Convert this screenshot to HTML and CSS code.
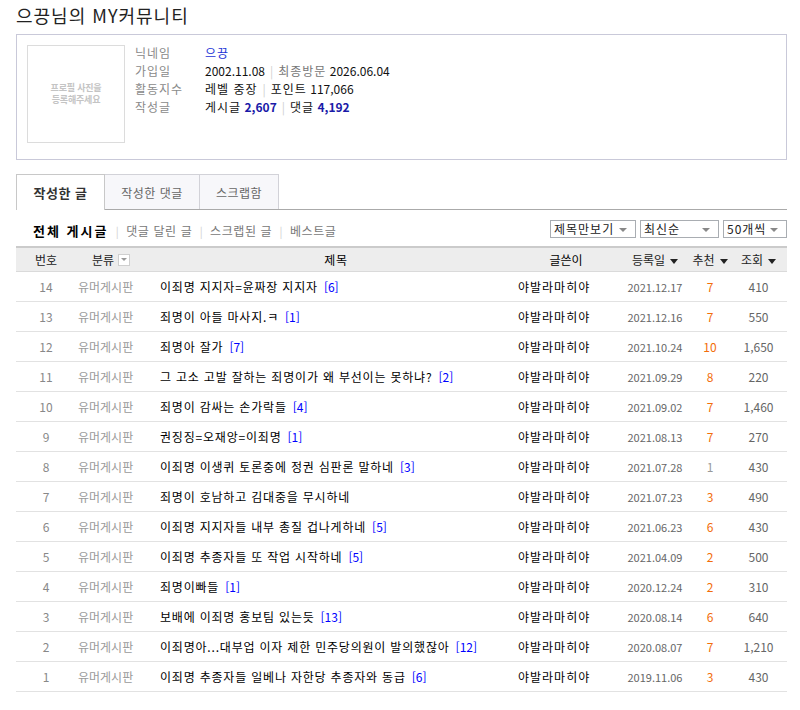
FILE: index.html
```html
<!DOCTYPE html>
<html lang="ko">
<head>
  <meta charset="UTF-8">
  <title>으끙님의 MY커뮤니티</title>
  <link rel="stylesheet" href="styles.css">
</head>
<body>

  <div class="page">
    <h1 class="page-title">으끙님의 MY커뮤니티</h1>

    <div class="profile">
      <div class="photo">
        <span>프로필 사진을<br>등록해주세요</span>
      </div>
      <div class="info">
        <div class="info-row">
          <span class="label">닉네임</span>
          <span class="value"><span class="nick ko">으끙</span></span>
        </div>
        <div class="info-row">
          <span class="label">가입일</span>
          <span class="value">2002.11.08<span class="sep">|</span><span class="sub-label ko">최종방문</span> 2026.06.04</span>
        </div>
        <div class="info-row">
          <span class="label">활동지수</span>
          <span class="value"><span class="ko">레벨 중장</span><span class="sep">|</span><span class="ko">포인트</span> 117,066</span>
        </div>
        <div class="info-row">
          <span class="label">작성글</span>
          <span class="value"><span class="ko">게시글</span> <b class="count">2,607</b><span class="sep">|</span><span class="ko">댓글</span> <b class="count">4,192</b></span>
        </div>
      </div>
    </div>

    <ul class="tabs">
      <li class="tab tab-posts active">작성한 글</li>
      <li class="tab tab-comments">작성한 댓글</li>
      <li class="tab tab-scraps">스크랩함</li>
    </ul>

    <div class="toolbar">
      <div class="subnav">
        <a class="current">전체 게시글</a>
        <span class="divider">|</span>
        <a>댓글 달린 글</a>
        <span class="divider">|</span>
        <a>스크랩된 글</a>
        <span class="divider">|</span>
        <a>베스트글</a>
      </div>
      <div class="selects">
        <div class="fake-select sel-view">제목만보기<i class="sel-arrow"></i></div>
        <div class="fake-select sel-order">최신순<i class="sel-arrow"></i></div>
        <div class="fake-select sel-count">50개씩<i class="sel-arrow"></i></div>
      </div>
    </div>

    <div class="board">
      <div class="board-row board-head">
        <div class="col-num">번호</div>
        <div class="col-cat">분류 <span class="filter-box"><i></i></span></div>
        <div class="col-title">제목</div>
        <div class="col-writer">글쓴이</div>
        <div class="col-date">등록일<i class="sort"></i></div>
        <div class="col-like">추천<i class="sort"></i></div>
        <div class="col-view">조회<i class="sort"></i></div>
      </div>
      <div id="rows"></div>
    </div>
  </div>

  <script>
    const posts = [
      [14, '이죄명 지지자=윤짜장 지지자', 6, '2021.12.17', 7, '410'],
      [13, '죄명이 아들 마사지.ㅋ', 1, '2021.12.16', 7, '550'],
      [12, '죄명아 잘가', 7, '2021.10.24', 10, '1,650'],
      [11, '그 고소 고발 잘하는 죄명이가 왜 부선이는 못하냐?', 2, '2021.09.29', 8, '220'],
      [10, '죄명이 감싸는 손가락들', 4, '2021.09.02', 7, '1,460'],
      [9, '권징징=오재앙=이죄명', 1, '2021.08.13', 7, '270'],
      [8, '이죄명 이생퀴 토론중에 정권 심판론 말하네', 3, '2021.07.28', 1, '430'],
      [7, '죄명이 호남하고 김대중을 무시하네', 0, '2021.07.23', 3, '490'],
      [6, '이죄명 지지자들 내부 총질 겁나게하네', 5, '2021.06.23', 6, '430'],
      [5, '이죄명 추종자들 또 작업 시작하네', 5, '2021.04.09', 2, '500'],
      [4, '죄명이빠들', 1, '2020.12.24', 2, '310'],
      [3, '보배에 이죄명 홍보팀 있는듯', 13, '2020.08.14', 6, '640'],
      [2, '이죄명아...대부업 이자 제한 민주당의원이 발의했잖아', 12, '2020.08.07', 7, '1,210'],
      [1, '이죄명 추종자들 일베나 자한당 추종자와 동급', 6, '2019.11.06', 3, '430']
    ];

    const rows = document.getElementById('rows');
    posts.forEach(function (p) {
      const row = document.createElement('div');
      row.className = 'board-row';
      const reply = p[2] ? '<span class="reply">[' + p[2] + ']</span>' : '';
      const likeClass = p[4] > 1 ? 'col-like hot' : 'col-like';
      row.innerHTML =
        '<div class="col-num">' + p[0] + '</div>' +
        '<div class="col-cat">유머게시판</div>' +
        '<div class="col-title"><a>' + p[1] + '</a>' + reply + '</div>' +
        '<div class="col-writer">야발라마히야</div>' +
        '<div class="col-date">' + p[3] + '</div>' +
        '<div class="' + likeClass + '">' + p[4] + '</div>' +
        '<div class="col-view">' + p[5] + '</div>';
      rows.appendChild(row);
    });
  </script>

</body>
</html>
```

FILE: styles.css
```css
* {
  box-sizing: border-box;
}

body {
  margin: 0;
  font-family: "Noto Sans CJK KR", "Liberation Sans", sans-serif;
  font-size: 12px;
  color: #222;
  background: #fff;
}

.ko {
  letter-spacing: 1px;
}

.page {
  width: 771px;
  margin-left: 16px;
  padding-top: 3px;
}

.page-title {
  margin: 0;
  font-size: 18px;
  font-weight: normal;
  line-height: 24px;
  letter-spacing: 1px;
  color: #222;
}

/* profile box */
.profile {
  display: flex;
  height: 126px;
  margin-top: 7px;
  padding: 10px;
  border: 1px solid #c9c9d9;
}

.photo {
  width: 98px;
  height: 98px;
  border: 1px solid #dcdcdc;
  display: flex;
  align-items: center;
  justify-content: center;
  text-align: center;
}

.photo span {
  font-size: 9px;
  font-weight: bold;
  line-height: 12px;
  letter-spacing: -0.2px;
  color: #c4c4c4;
}

.info {
  margin-left: 10px;
  margin-top: -1px;
}

.info-row {
  display: flex;
  line-height: 18px;
}

.label {
  width: 70px;
  letter-spacing: 1px;
  color: #8a8a8a;
}

.value {
  color: #111;
}

.nick {
  color: #1c33d6;
}

.count {
  color: #1a1aa8;
}

.sep {
  margin: 0 5px;
  color: #cfcfcf;
}

.sub-label {
  color: #777;
}

/* tabs */
.tabs {
  display: flex;
  align-items: flex-start;
  height: 36px;
  margin: 14px 0 0;
  padding: 0;
  list-style: none;
  border-bottom: 1px solid #aaa;
}

.tab {
  height: 35px;
  display: flex;
  align-items: center;
  justify-content: center;
  border: 1px solid #d2d2d8;
  border-bottom: none;
  border-left: none;
  background: #f7f7fa;
  color: #666;
  font-size: 12px;
  letter-spacing: 0.5px;
}

.tab.active {
  height: 36px;
  border-left: 1px solid #c8c8c8;
  border-color: #c8c8c8;
  background: #fff;
  color: #333;
  font-size: 13px;
  font-weight: bold;
}

.tab-posts {
  width: 89px;
}

.tab-comments {
  width: 95px;
}

.tab-scraps {
  width: 79px;
}

/* toolbar */
.toolbar {
  display: flex;
  justify-content: space-between;
  height: 36px;
  padding-top: 10px;
}

.subnav {
  padding: 3px 0 0 17px;
  line-height: 16px;
  color: #777;
}

.subnav a {
  color: #777;
  letter-spacing: 0.6px;
}

.subnav .current {
  color: #000;
  font-size: 13px;
  font-weight: bold;
  letter-spacing: 2px;
}

.divider {
  margin: 0 4px;
  color: #d0d0d0;
  font-size: 11px;
}

.selects {
  display: flex;
  gap: 4px;
}

.fake-select {
  position: relative;
  height: 18px;
  padding-left: 3px;
  border: 1px solid #a9adb2;
  line-height: 16px;
  font-size: 12px;
  letter-spacing: 1px;
  color: #222;
  background: #fff;
}

.sel-view {
  width: 86px;
}

.sel-order {
  width: 79px;
}

.sel-count {
  width: 64px;
}

.sel-arrow {
  position: absolute;
  right: 8px;
  top: 7px;
  border-left: 4px solid transparent;
  border-right: 4px solid transparent;
  border-top: 4px solid #888;
}

/* board */
.board-row {
  display: grid;
  grid-template-columns: 60px 74px 362px 108px 70px 40px 57px;
  height: 30px;
  align-items: center;
  border-bottom: 1px solid #e2e2e2;
}

.board-head {
  height: 26px;
  border-top: 2px solid #cbcbcb;
  border-bottom: 1px solid #dadada;
  background: #ededed;
  color: #222;
}

.board-head > div {
  text-align: center;
}

.col-num {
  text-align: center;
  color: #888;
}

.col-cat {
  padding-left: 2px;
  color: #9a9a9a;
}

.col-title {
  padding-left: 10px;
  white-space: nowrap;
  letter-spacing: 0.8px;
  color: #000;
}

.col-writer {
  padding-left: 6px;
  letter-spacing: 1px;
  color: #000;
}

.col-date {
  text-align: center;
  font-size: 11px;
  color: #666;
}

.col-like {
  text-align: center;
  color: #999;
}

.col-like.hot {
  color: #f26d0a;
}

.col-view {
  text-align: center;
  color: #666;
}

.board-head .col-num,
.board-head .col-cat,
.board-head .col-date,
.board-head .col-like,
.board-head .col-view {
  color: #222;
  font-size: 12px;
  padding-left: 0;
}

.board-head .col-writer {
  padding-left: 0;
  letter-spacing: 0;
}

.board-head .col-cat {
  padding-right: 4px;
  display: flex;
  align-items: center;
  justify-content: center;
}

.filter-box {
  display: inline-flex;
  align-items: center;
  justify-content: center;
  width: 12px;
  height: 12px;
  margin-left: 4px;
  border: 1px solid #cfcfcf;
  background: #fff;
}

.filter-box i {
  border-left: 3px solid transparent;
  border-right: 3px solid transparent;
  border-top: 3px solid #999;
}

.sort {
  display: inline-block;
  margin-left: 5px;
  vertical-align: middle;
  border-left: 4px solid transparent;
  border-right: 4px solid transparent;
  border-top: 5px solid #222;
}

.reply {
  margin-left: 6px;
  letter-spacing: 0;
  color: #0000ff;
}
```
